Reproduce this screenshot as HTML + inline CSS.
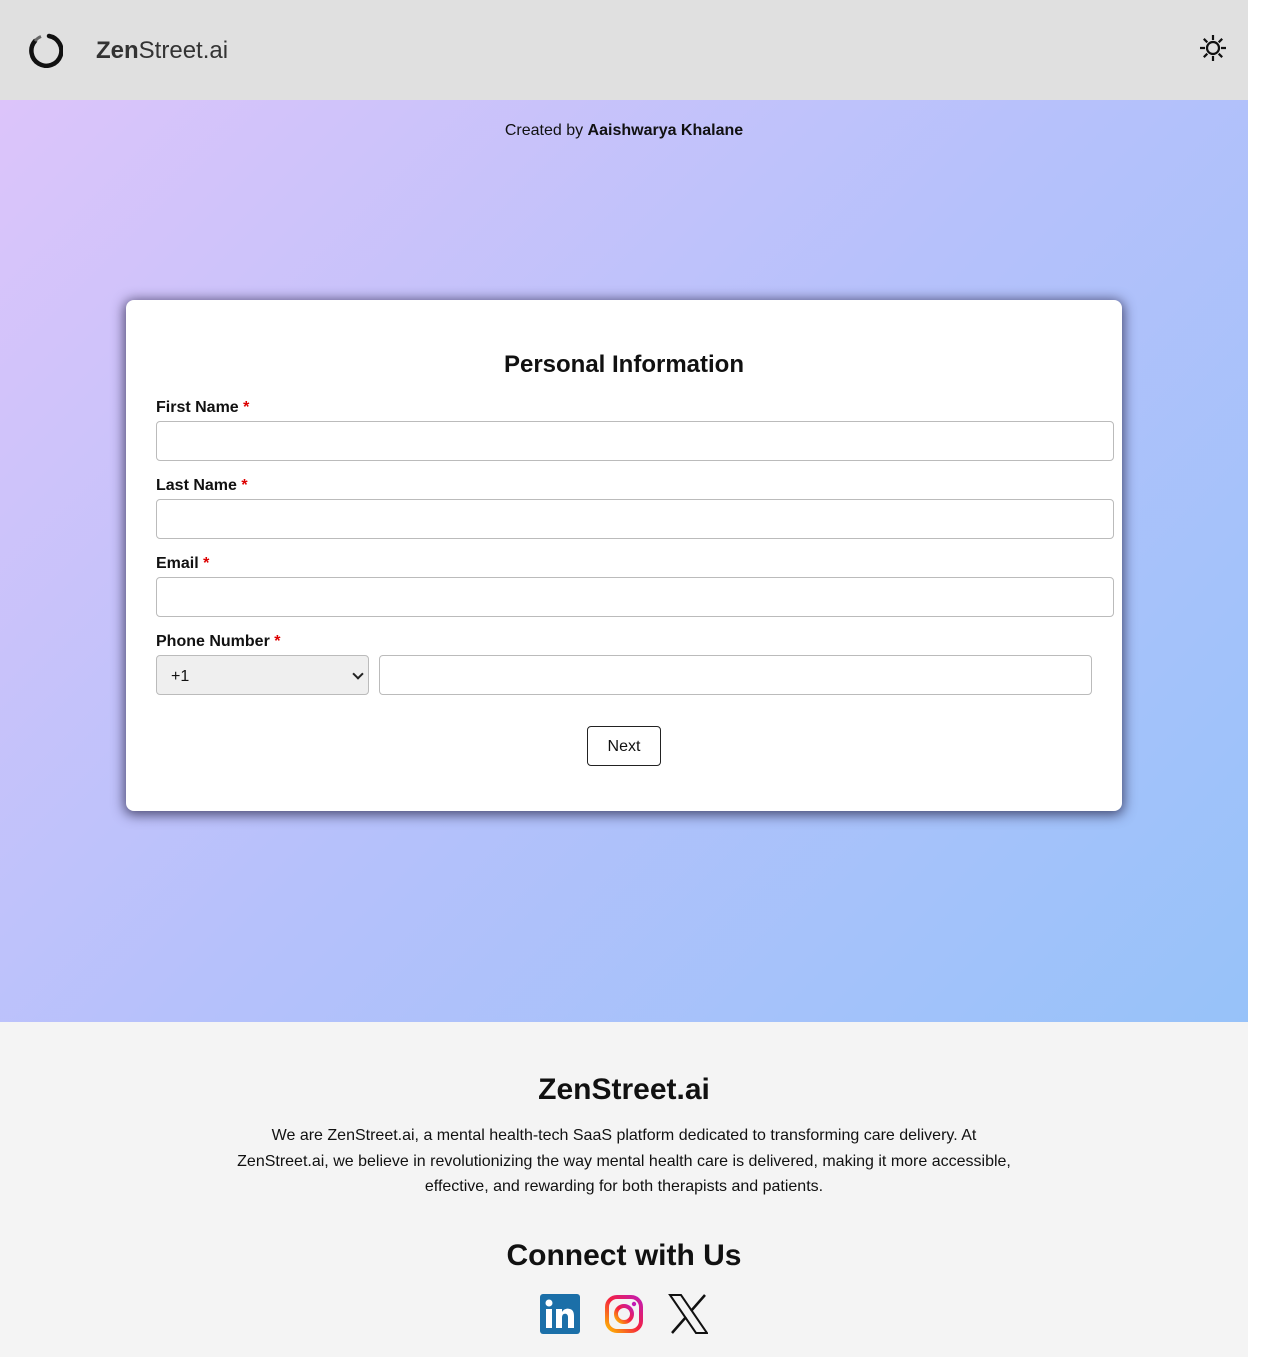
<!DOCTYPE html>
<html><head><meta charset="utf-8"><style>
*{box-sizing:border-box}
body{margin:0;background:#fff;font-family:"Liberation Sans",Arial,sans-serif;width:1280px;height:1357px;overflow:hidden}
.wrap{width:1248px}
header{height:100px;background:#e0e0e0;position:relative}
.logo{position:absolute;left:27px;top:32px}
.brand{position:absolute;left:96px;top:37px;font-size:24px;color:#333}
.sun{position:absolute;left:1198px;top:33px}
main{height:922px;background:linear-gradient(135deg,#dcc4fa 0%,#b6c1fb 50%,#97c2f9 100%);position:relative}
.created{position:absolute;top:22px;width:100%;text-align:center;font-size:16px;color:#111}
.card{position:absolute;left:126px;top:200px;width:996px;height:511px;background:#fff;border-radius:8px;box-shadow:0 2px 12px 2px rgba(30,25,60,.7)}
h2{margin:0;position:absolute;top:51px;width:100%;text-align:center;font-size:24px;color:#111}
label{position:absolute;left:30px;font-weight:bold;font-size:16px;color:#111}
label span{color:#d00}
.in{position:absolute;left:30px;width:958px;height:40px;border:1px solid #bbb;border-radius:4px;background:#fff}
.sel{position:absolute;left:30px;width:213px;height:40px;border:1px solid #bbb;border-radius:4px;background:#efefef;font-size:16px;padding:12px 14px;color:#111}
.sel:after{content:"";position:absolute;right:6px;top:14px;width:6px;height:6px;border-right:2px solid #222;border-bottom:2px solid #222;transform:rotate(45deg)}
.btn{position:absolute;left:461px;top:426px;width:74px;height:40px;border:1px solid #222;border-radius:4px;text-align:center;line-height:40px;font-size:16px;color:#111}
footer{height:335px;background:#f4f4f4;position:relative;text-align:center;color:#111}
footer h3{margin:0;position:absolute;width:100%;font-size:30px;font-weight:bold}
footer p{position:absolute;top:101px;left:230px;width:788px;margin:0;font-size:16px;line-height:25.5px}
</style></head><body><div class="wrap">
<header>
<svg class="logo" width="36" height="36" viewBox="0 0 36 36"><path d="M22 4 A15 15 0 1 1 8 9" fill="none" stroke="#111" stroke-width="4.5" stroke-linecap="round"/><path d="M8 9 A15 15 0 0 1 14 4.5" fill="none" stroke="#666" stroke-width="3"/></svg>
<div class="brand"><b>Zen</b>Street.ai</div>
<svg class="sun" width="30" height="30" viewBox="0 0 30 30" stroke="#111" stroke-width="2.2" fill="none"><circle cx="15" cy="15" r="6"/><path d="M15 2v5M15 23v5M2 15h5M23 15h5M5.8 5.8l3.5 3.5M20.7 20.7l3.5 3.5M5.8 24.2l3.5-3.5M20.7 9.3l3.5-3.5"/></svg>
</header>
<main>
<div class="created">Created by <b>Aaishwarya Khalane</b></div>
<div class="card">
<h2>Personal Information</h2>
<label style="top:99px">First Name <span>*</span></label>
<div class="in" style="top:121px"></div>
<label style="top:177px">Last Name <span>*</span></label>
<div class="in" style="top:199px"></div>
<label style="top:255px">Email <span>*</span></label>
<div class="in" style="top:277px"></div>
<label style="top:333px">Phone Number <span>*</span></label>
<div class="sel" style="top:355px">+1</div>
<div class="in" style="top:355px;left:253px;width:713px"></div>
<div class="btn">Next</div>
</div>
</main>
<footer>
<h3 style="top:51px">ZenStreet.ai</h3>
<p>We are ZenStreet.ai, a mental health-tech SaaS platform dedicated to transforming care delivery. At ZenStreet.ai, we believe in revolutionizing the way mental health care is delivered, making it more accessible, effective, and rewarding for both therapists and patients.</p>
<h3 style="top:217px">Connect with Us</h3>
<svg style="position:absolute;left:540px;top:272px" width="40" height="40" viewBox="0 0 40 40"><rect width="40" height="40" rx="3" fill="#1b6fa8"/><rect x="6" y="15" width="6" height="19" fill="#fff"/><circle cx="9" cy="9" r="3.5" fill="#fff"/><path d="M16 15h6v3c1.5-2.5 4-3.5 6.5-3.3 4 .3 5.5 3 5.5 7.3V34h-6V23.5c0-2.5-1-3.8-3-3.8s-3 1.5-3 3.8V34h-6z" fill="#fff"/></svg>
<svg style="position:absolute;left:604px;top:272px" width="40" height="40" viewBox="0 0 40 40"><defs><linearGradient id="g" x1="0" y1="1" x2="1" y2="0"><stop offset="0" stop-color="#fdb900"/><stop offset=".5" stop-color="#f5213f"/><stop offset="1" stop-color="#c21bb4"/></linearGradient></defs><rect x="3" y="3" width="34" height="34" rx="10" fill="none" stroke="url(#g)" stroke-width="4"/><circle cx="20" cy="20" r="8" fill="none" stroke="url(#g)" stroke-width="4"/><circle cx="30" cy="10" r="2.2" fill="#c21bb4"/></svg>
<svg style="position:absolute;left:668px;top:272px" width="40" height="40" viewBox="0 0 40 40"><path d="M2 1h11l26 38H28z" fill="none" stroke="#111" stroke-width="2"/><path d="M37 1L23 17M4 39l14-16" stroke="#111" stroke-width="2.5"/></svg>
</footer>
</div></body></html>
